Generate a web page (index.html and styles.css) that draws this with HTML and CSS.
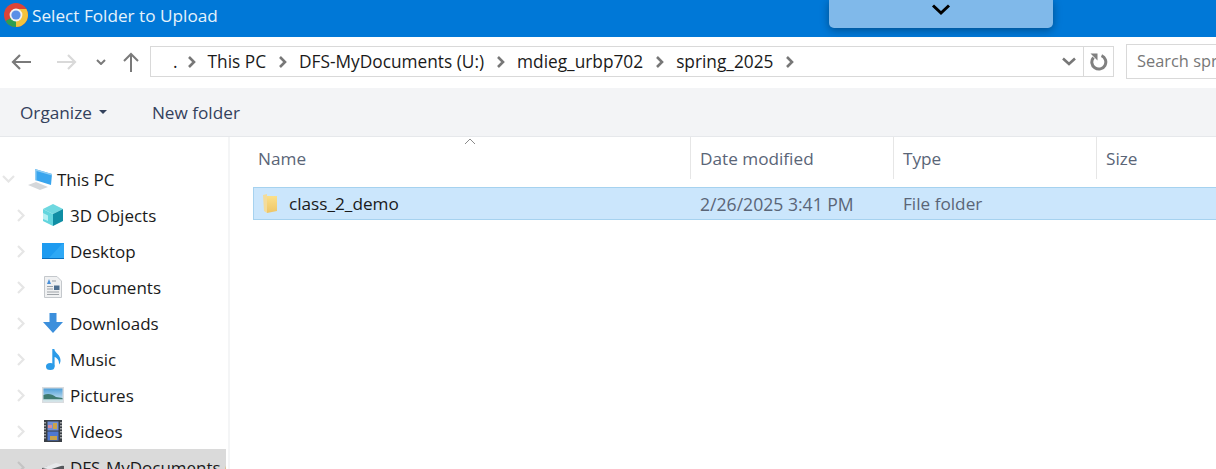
FILE: index.html
```html
<!DOCTYPE html>
<html lang="en">
<head>
    <meta charset="UTF-8">
    <meta name="viewport" content="width=device-width, initial-scale=1.0">
    <title>Select Folder to Upload</title>
    <link rel="stylesheet" href="styles.css">
</head>
<body>
    <div class="dialog">
        <header class="titlebar">
            <svg class="chrome-logo" width="26" height="26" viewBox="0 0 26 26">
                <circle cx="13" cy="13" r="12" fill="#db4437"/>
                <path d="M13 13 L2.6 19 A12 12 0 0 0 13 25 Z" fill="#2f9e4f"/>
                <path d="M13 13 L13 25 A12 12 0 0 0 25 13 A12 12 0 0 0 23.4 7 L13 7 Z" fill="#f2c33c"/>
                <circle cx="13" cy="13" r="6.4" fill="#f1f1f1"/>
                <circle cx="13" cy="13" r="4.6" fill="#5b8fe6"/>
            </svg>
            <span class="title-text">Select Folder to Upload</span>
            <div class="dropdown-tab">
                <svg width="20" height="12" viewBox="0 0 20 12"><path d="M2 1.5 L10 9 L18 1.5" fill="none" stroke="#000" stroke-width="3"/></svg>
            </div>
        </header>

        <div class="addressrow">
            <div class="navbtns">
                <svg class="nav-back" width="20" height="16" viewBox="0 0 20 16"><path d="M20 8 H2 M9 1 L2 8 L9 15" fill="none" stroke="#7a7a7a" stroke-width="2.2"/></svg>
                <svg class="nav-fwd" width="20" height="16" viewBox="0 0 20 16"><path d="M0 8 H18 M11 1 L18 8 L11 15" fill="none" stroke="#d9d9d9" stroke-width="2.2"/></svg>
                <svg class="nav-recent" width="10" height="6" viewBox="0 0 10 6"><path d="M1 1 L5 5 L9 1" fill="none" stroke="#7a7a7a" stroke-width="2"/></svg>
                <svg class="nav-up" width="16" height="20" viewBox="0 0 16 20"><path d="M8 20 V2 M1 9 L8 2 L15 9" fill="none" stroke="#7a7a7a" stroke-width="2"/></svg>
            </div>
            <div class="pathbox">
                <div class="crumbs">
                    <span class="crumb crumb-dot">.</span>
                    <svg class="sep" width="9" height="12" viewBox="0 0 9 12"><path d="M2 1 L7 6 L2 11" fill="none" stroke="#777" stroke-width="2.6"/></svg>
                    <span class="crumb">This PC</span>
                    <svg class="sep" width="9" height="12" viewBox="0 0 9 12"><path d="M2 1 L7 6 L2 11" fill="none" stroke="#777" stroke-width="2.6"/></svg>
                    <span class="crumb">DFS-MyDocuments (U:)</span>
                    <svg class="sep" width="9" height="12" viewBox="0 0 9 12"><path d="M2 1 L7 6 L2 11" fill="none" stroke="#777" stroke-width="2.6"/></svg>
                    <span class="crumb">mdieg_urbp702</span>
                    <svg class="sep" width="9" height="12" viewBox="0 0 9 12"><path d="M2 1 L7 6 L2 11" fill="none" stroke="#777" stroke-width="2.6"/></svg>
                    <span class="crumb">spring_2025</span>
                    <svg class="sep" width="9" height="12" viewBox="0 0 9 12"><path d="M2 1 L7 6 L2 11" fill="none" stroke="#777" stroke-width="2.6"/></svg>
                </div>
                <svg class="path-drop" width="14" height="9" viewBox="0 0 14 9"><path d="M1 1.5 L7 7 L13 1.5" fill="none" stroke="#777" stroke-width="2.6"/></svg>
                <div class="refresh">
                    <svg width="18" height="18" viewBox="0 0 18 18"><path d="M3.5 4.5 A7 7 0 1 0 11.5 2.6" fill="none" stroke="#808080" stroke-width="3"/><path d="M0.5 0.5 H7.5 V7.5 Z" fill="#808080"/></svg>
                </div>
            </div>
            <div class="searchbox">Search spring_2025</div>
        </div>

        <div class="toolbar">
            <span class="tool organize">Organize<span class="caret"></span></span>
            <span class="tool">New folder</span>
        </div>

        <div class="panes">
            <nav class="tree">
                <div class="tree-row tree-root">
                    <svg class="twisty" width="13" height="8" viewBox="0 0 13 8"><path d="M1 1 L6.5 6.5 L12 1" fill="none" stroke="#e6e6e6" stroke-width="2.2"/></svg>
                    <svg class="tree-icon" width="24" height="21" viewBox="0 0 24 21">
                        <path d="M0 16 L8 13 L20 18 L12 21 Z" fill="#d5d8db"/>
                        <path d="M7 0 L24 5 L23 16 L7 11 Z" fill="#39a5ee"/>
                        <path d="M7 0 L24 5 L24 6.5 L8.5 2 L8.5 11.5 L7 11 Z" fill="#8fcdf4"/>
                    </svg>
                    <span>This PC</span>
                </div>
                <div class="tree-row">
                    <svg class="twisty" width="8" height="13" viewBox="0 0 8 13"><path d="M1 1 L6.5 6.5 L1 12" fill="none" stroke="#e6e6e6" stroke-width="2.2"/></svg>
                    <svg class="tree-icon" width="22" height="22" viewBox="0 0 22 22">
                        <path d="M11 0 L21 5 L11 10 L1 5 Z" fill="#6fd8e0"/>
                        <path d="M1 5 L11 10 V22 L1 17 Z" fill="#63d5de"/>
                        <path d="M1 9 L6 11.5 V17 L1 15 Z" fill="#b5f0f3"/>
                        <path d="M21 5 L11 10 V22 L21 17 Z" fill="#0f8ea4"/>
                    </svg>
                    <span>3D Objects</span>
                </div>
                <div class="tree-row">
                    <svg class="twisty" width="8" height="13" viewBox="0 0 8 13"><path d="M1 1 L6.5 6.5 L1 12" fill="none" stroke="#e6e6e6" stroke-width="2.2"/></svg>
                    <svg class="tree-icon" width="22" height="16" viewBox="0 0 22 16">
                        <rect width="22" height="16" fill="#1e9bf0"/>
                        <path d="M7 15 L20 1 H22 V15 Z" fill="#2ea8f5"/>
                        <path d="M0 15 H22 V16 H0 Z" fill="#0a6ebd"/>
                    </svg>
                    <span>Desktop</span>
                </div>
                <div class="tree-row">
                    <svg class="twisty" width="8" height="13" viewBox="0 0 8 13"><path d="M1 1 L6.5 6.5 L1 12" fill="none" stroke="#e6e6e6" stroke-width="2.2"/></svg>
                    <svg class="tree-icon" width="18" height="22" viewBox="0 0 18 22">
                        <path d="M0.5 0.5 H13 L17.5 5 V21.5 H0.5 Z" fill="#f0f1f2" stroke="#c4c8cc"/>
                        <path d="M3 8 L5 3 L7 8 Z" fill="#4a90d9"/>
                        <path d="M8 5 H12 M3 10.5 H9 M3 13 H9 M3 16 H15 M3 18.5 H15" stroke="#9ea3a8" stroke-width="1"/>
                        <path d="M10 9.5 H15.5 V14 H10 Z" fill="#4f6f8f"/>
                    </svg>
                    <span>Documents</span>
                </div>
                <div class="tree-row">
                    <svg class="twisty" width="8" height="13" viewBox="0 0 8 13"><path d="M1 1 L6.5 6.5 L1 12" fill="none" stroke="#e6e6e6" stroke-width="2.2"/></svg>
                    <svg class="tree-icon" width="20" height="20" viewBox="0 0 20 20"><path d="M6.5 0 H13.5 V9 H20 L10 20 L0 9 H6.5 Z" fill="#3c8fdc"/></svg>
                    <span>Downloads</span>
                </div>
                <div class="tree-row">
                    <svg class="twisty" width="8" height="13" viewBox="0 0 8 13"><path d="M1 1 L6.5 6.5 L1 12" fill="none" stroke="#e6e6e6" stroke-width="2.2"/></svg>
                    <svg class="tree-icon" width="15" height="21" viewBox="0 0 15 21">
                        <ellipse cx="4.3" cy="17.5" rx="4.3" ry="3.5" fill="#2b9be8"/>
                        <path d="M6.3 17.5 V0 H8.3 C8.8 4 15 6 14.5 12 C14.3 14 13.5 15 13 15.5 C13.5 11 10.5 8.5 8.6 8 V17.5 Z" fill="#2b9be8"/>
                    </svg>
                    <span>Music</span>
                </div>
                <div class="tree-row">
                    <svg class="twisty" width="8" height="13" viewBox="0 0 8 13"><path d="M1 1 L6.5 6.5 L1 12" fill="none" stroke="#e6e6e6" stroke-width="2.2"/></svg>
                    <svg class="tree-icon" width="22" height="16" viewBox="0 0 22 16">
                        <defs>
                            <linearGradient id="sky" x1="0" y1="0" x2="0" y2="1">
                                <stop offset="0" stop-color="#4f9fd8"/>
                                <stop offset="1" stop-color="#d8ebf5"/>
                            </linearGradient>
                        </defs>
                        <rect width="22" height="16" fill="#d9dcdf"/>
                        <rect x="1.5" y="1.5" width="19" height="13" fill="url(#sky)"/>
                        <path d="M1.5 8 C6 6 10 7 14 10 L20.5 11 V12.5 H1.5 Z" fill="#3f7a70"/>
                        <path d="M1.5 12.5 H20.5 V14.5 H1.5 Z" fill="#cfe3e6"/>
                    </svg>
                    <span>Pictures</span>
                </div>
                <div class="tree-row">
                    <svg class="twisty" width="8" height="13" viewBox="0 0 8 13"><path d="M1 1 L6.5 6.5 L1 12" fill="none" stroke="#e6e6e6" stroke-width="2.2"/></svg>
                    <svg class="tree-icon" width="18" height="22" viewBox="0 0 18 22">
                        <rect width="18" height="22" fill="#3a3f45"/>
                        <rect x="3.5" y="1.5" width="11" height="9" fill="#6f8fd8"/>
                        <rect x="3.5" y="11.5" width="11" height="9" fill="#4f78cf"/>
                        <path d="M9 3 H13 V9 H9 Z M6 16 H13 V20 H6 Z" fill="#c9a34a"/>
                        <path d="M4 5 H8 V8 H4 Z" fill="#d88a9a"/>
                        <path d="M1 2 V20 M17 2 V20" stroke="#e6e6e6" stroke-width="1.2" stroke-dasharray="1.5 1.5"/>
                    </svg>
                    <span>Videos</span>
                </div>
                <div class="tree-row tree-selected">
                    <svg class="twisty" width="8" height="13" viewBox="0 0 8 13"><path d="M1 1 L6.5 6.5 L1 12" fill="none" stroke="#c4c4c4" stroke-width="2.2"/></svg>
                    <svg class="tree-icon drive-icon" width="22" height="16" viewBox="0 0 22 16"><path d="M0 5 L14 1 L22 3 V12 L8 16 L0 12 Z" fill="#55585c"/><path d="M0 5 L14 0 L22 2 L8 6.5 Z" fill="#e6e8ea"/></svg>
                    <span>DFS-MyDocuments (U:)</span>
                </div>
            </nav>

            <main class="files">
                <svg class="sort-arrow" width="12" height="7" viewBox="0 0 12 7"><path d="M1 6 L6 1 L11 6" fill="none" stroke="#8a8a8a"/></svg>
                <div class="file-head">
                    <div class="col col-name">Name</div>
                    <div class="col col-date">Date modified</div>
                    <div class="col col-type">Type</div>
                    <div class="col col-size">Size</div>
                </div>
                <div class="file-row">
                    <div class="cell cell-name">
                        <svg width="16" height="19" viewBox="0 0 16 19">
                            <defs>
                                <linearGradient id="folder" x1="0" y1="0" x2="0" y2="1">
                                    <stop offset="0" stop-color="#fbe08a"/>
                                    <stop offset="1" stop-color="#eec566"/>
                                </linearGradient>
                            </defs>
                            <path d="M0 1 L4 0 V19 L1 17 Z" fill="#f3dc9c"/>
                            <path d="M4 2 H14 V17 L4 19 Z" fill="url(#folder)"/>
                        </svg>
                        <span>class_2_demo</span>
                    </div>
                    <div class="cell cell-date">2/26/2025 3:41 PM</div>
                    <div class="cell cell-type">File folder</div>
                    <div class="cell cell-size"></div>
                </div>
            </main>
        </div>
    </div>
</body>
</html>
```

FILE: styles.css
```css
html, body {
    margin: 0;
    padding: 0;
    height: 100%;
    overflow: hidden;
}
body {
    font-family: "Open Sans", "Noto Sans", sans-serif;
    font-size: 17.2px;
    color: #1a1a1a;
    background-color: #fff;
}
.dialog {
    display: flex;
    flex-direction: column;
    height: 469px;
    width: 1216px;
    overflow: hidden;
}

/* title bar */
.titlebar {
    position: relative;
    display: flex;
    align-items: center;
    height: 37px;
    flex-shrink: 0;
    padding: 0 0 7px 3px;
    box-sizing: border-box;
    background-color: #0078d7;
    color: #e6f2fb;
}
.chrome-logo {
    margin-right: 3px;
}
.dropdown-tab {
    position: absolute;
    left: 829px;
    top: 0;
    width: 224px;
    height: 28px;
    display: flex;
    justify-content: center;
    padding-top: 4px;
    box-sizing: border-box;
    background-color: #80b9ea;
    border-radius: 0 0 5px 5px;
    box-shadow: 0 2px 8px rgba(0, 0, 0, 0.35);
}

/* address row */
.addressrow {
    display: flex;
    align-items: center;
    height: 51px;
    flex-shrink: 0;
    box-sizing: border-box;
    padding: 0 0 2px 11px;
}
.navbtns {
    display: flex;
    align-items: center;
    width: 139px;
    flex-shrink: 0;
}
.nav-fwd {
    margin-left: 26px;
}
.nav-recent {
    margin-left: 19px;
}
.nav-up {
    margin-left: 17px;
}
.pathbox {
    display: flex;
    align-items: center;
    width: 964px;
    height: 31px;
    flex-shrink: 0;
    box-sizing: border-box;
    border: 1px solid #d9d9d9;
}
.crumbs {
    display: flex;
    align-items: center;
    gap: 12px;
    flex: 1;
    padding-left: 19px;
    font-size: 17.3px;
    color: #1a1a1a;
}
.crumb-dot {
    margin: 0 -3px 0 3px;
}
.path-drop {
    margin-right: 7px;
}
.refresh {
    display: flex;
    align-items: center;
    justify-content: center;
    width: 29px;
    height: 100%;
    border-left: 1px solid #d9d9d9;
}
.searchbox {
    margin-left: 12px;
    width: 120px;
    height: 33px;
    flex-shrink: 0;
    padding-left: 10px;
    line-height: 32px;
    font-size: 16.4px;
    white-space: nowrap;
    overflow: hidden;
    border: 1px solid #d9d9d9;
    color: #777;
}

/* toolbar */
.toolbar {
    display: flex;
    align-items: center;
    height: 49px;
    flex-shrink: 0;
    padding-left: 20px;
    gap: 45px;
    box-sizing: border-box;
    background-color: #f3f4f6;
    border-bottom: 1px solid #e6e8eb;
    color: #33415c;
}
.organize {
    display: flex;
    align-items: center;
}
.caret {
    margin-left: 7px;
    border-left: 4.5px solid transparent;
    border-right: 4.5px solid transparent;
    border-top: 4.5px solid #33415c;
}

/* panes */
.panes {
    display: flex;
    flex: 1;
    min-height: 0;
}
.tree {
    width: 230px;
    flex-shrink: 0;
    padding-top: 24px;
    box-sizing: border-box;
    border-right: 2px solid #f4f5f6;
    font-size: 17px;
}
.tree-row {
    display: grid;
    grid-template-columns: 42px 22px 1fr;
    align-items: center;
    justify-items: center;
    height: 36px;
    white-space: nowrap;
    overflow: hidden;
}
.tree-row span {
    justify-self: start;
    margin-left: 6px;
}
.tree-root {
    grid-template-columns: 17px 35px 1fr;
}
.tree-root .tree-icon {
    justify-self: end;
}
.tree-root span {
    margin-left: 5px;
}
.tree-selected {
    background-color: #dadada;
    margin-right: 2px;
}
.drive-icon {
    margin-top: 8px;
}

/* file list */
.files {
    position: relative;
    flex: 1;
    min-width: 0;
}
.sort-arrow {
    position: absolute;
    left: 234px;
    top: 1px;
}
.file-head {
    display: grid;
    grid-template-columns: 461px 203px 203px 1fr;
    height: 42px;
    color: #5a6577;
}
.col {
    display: flex;
    align-items: center;
    padding-left: 9px;
    border-right: 1px solid #e6e6e6;
}
.col-name {
    padding-left: 28px;
}
.col-size {
    border-right: none;
}
.file-row {
    display: grid;
    grid-template-columns: 437px 203px 203px 1fr;
    align-items: center;
    height: 33px;
    margin: 8px 0 0 23px;
    box-sizing: border-box;
    background-color: #cbe6fc;
    border: 1px solid #a6d2ef;
    border-right: none;
    color: #5a6577;
}
.cell {
    padding-left: 9px;
}
.cell-name {
    display: flex;
    align-items: center;
    gap: 10px;
    color: #1a1a1a;
}
.cell-date {
    font-size: 17.6px;
}
```
